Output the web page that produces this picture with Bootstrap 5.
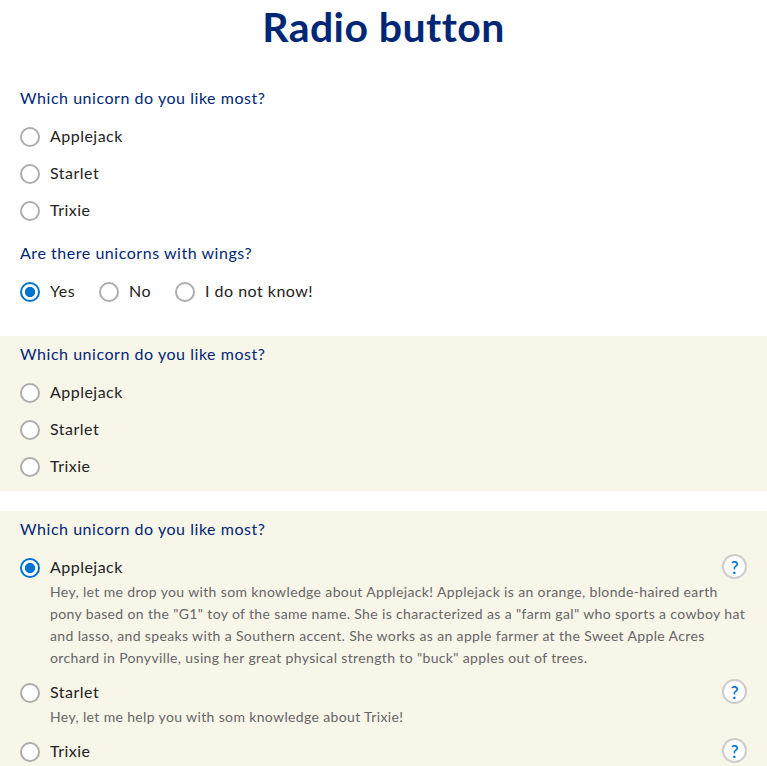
<!DOCTYPE html>
<html lang="en">
<head>
<meta charset="utf-8">
<meta name="viewport" content="width=device-width, initial-scale=1">
<title>Radio button</title>
<link href="https://cdn.jsdelivr.net/npm/bootstrap@5.3.0/dist/css/bootstrap.min.css" rel="stylesheet">
<style>
body{font-family:Lato,"Open Sans",sans-serif;font-weight:400;font-size:16px;line-height:22px;color:#222;letter-spacing:.48px;overflow:hidden;height:766px}
h1.page-title{font-size:41px;line-height:53px;font-weight:700;color:#002776;letter-spacing:.42px;margin-bottom:27px}
.group{padding:7px 20px 13px}
.group.tinted{background:#f8f5e9;margin-top:20px}
.group legend{font-size:16px;line-height:22px;color:#002776;margin:0 0 17px;letter-spacing:.54px}
.choices{display:grid;row-gap:15px}
.choices.detailed{row-gap:12px}
.form-check.choice{display:flex;align-items:center;gap:10px;padding:0;margin:0;min-height:22px;height:22px}
.choice label{padding-bottom:2px}
.choice .form-check-input{float:none;flex:none;width:20px;height:20px;margin:0;border:2px solid #adadad;background-color:#fff}
.choice .form-check-input:checked{border-color:#0073d1;background-image:radial-gradient(circle,#0073d1 4.8px,transparent 5.4px);background-size:100% 100%;background-origin:border-box}
.choice-head{height:22px}
.help-btn{width:25px;height:25px;margin-top:-3px;border:2px solid #ccc;border-radius:50%;background:#fff;color:#0073d1;font-size:17px;line-height:23px;font-weight:600;letter-spacing:0;flex:none}
.hint{font-size:14px;line-height:22px;color:#666;margin:2px -8px 1px 30px;letter-spacing:.36px;white-space:nowrap}
</style>
</head>
<body>
<h1 class="page-title text-center">Radio button</h1>
<main>
<fieldset class="group">
<legend>Which unicorn do you like most?</legend>
<div class="choices">
<div class="form-check choice"><input class="form-check-input" type="radio" name="a" id="a1"><label for="a1">Applejack</label></div>
<div class="form-check choice"><input class="form-check-input" type="radio" name="a" id="a2"><label for="a2">Starlet</label></div>
<div class="form-check choice"><input class="form-check-input" type="radio" name="a" id="a3"><label for="a3">Trixie</label></div>
</div>
</fieldset>
<fieldset class="group">
<legend>Are there unicorns with wings?</legend>
<div class="d-flex gap-4">
<div class="form-check choice"><input class="form-check-input" type="radio" name="b" id="b1" checked><label for="b1">Yes</label></div>
<div class="form-check choice"><input class="form-check-input" type="radio" name="b" id="b2"><label for="b2">No</label></div>
<div class="form-check choice"><input class="form-check-input" type="radio" name="b" id="b3"><label for="b3">I do not know!</label></div>
</div>
</fieldset>
<fieldset class="group tinted">
<legend>Which unicorn do you like most?</legend>
<div class="choices">
<div class="form-check choice"><input class="form-check-input" type="radio" name="c" id="c1"><label for="c1">Applejack</label></div>
<div class="form-check choice"><input class="form-check-input" type="radio" name="c" id="c2"><label for="c2">Starlet</label></div>
<div class="form-check choice"><input class="form-check-input" type="radio" name="c" id="c3"><label for="c3">Trixie</label></div>
</div>
</fieldset>
<fieldset class="group tinted">
<legend>Which unicorn do you like most?</legend>
<div class="choices detailed">
<div>
<div class="d-flex justify-content-between align-items-start choice-head"><div class="form-check choice"><input class="form-check-input" type="radio" name="d" id="d1" checked><label for="d1">Applejack</label></div><button type="button" class="help-btn p-0" aria-label="Help">?</button></div>
<p class="hint">Hey, let me drop you with som knowledge about Applejack! Applejack is an orange, blonde-haired earth<br>pony based on the "G1" toy of the same name. She is characterized as a "farm gal" who sports a cowboy hat<br>and lasso, and speaks with a Southern accent. She works as an apple farmer at the Sweet Apple Acres<br>orchard in Ponyville, using her great physical strength to "buck" apples out of trees.</p>
</div>
<div>
<div class="d-flex justify-content-between align-items-start choice-head"><div class="form-check choice"><input class="form-check-input" type="radio" name="d" id="d2"><label for="d2">Starlet</label></div><button type="button" class="help-btn p-0" aria-label="Help">?</button></div>
<p class="hint">Hey, let me help you with som knowledge about Trixie!</p>
</div>
<div>
<div class="d-flex justify-content-between align-items-start choice-head"><div class="form-check choice"><input class="form-check-input" type="radio" name="d" id="d3"><label for="d3">Trixie</label></div><button type="button" class="help-btn p-0" aria-label="Help">?</button></div>
</div>
</div>
</fieldset>
</main>
<script src="https://cdn.jsdelivr.net/npm/bootstrap@5.3.0/dist/js/bootstrap.bundle.min.js"></script>
</body>
</html>
